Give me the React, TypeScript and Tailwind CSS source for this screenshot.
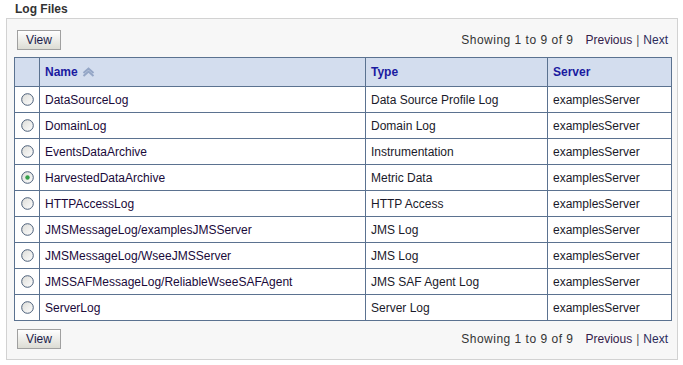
import React, { useState } from "react";

const rows = [
  { name: "DataSourceLog", type: "Data Source Profile Log", server: "examplesServer" },
  { name: "DomainLog", type: "Domain Log", server: "examplesServer" },
  { name: "EventsDataArchive", type: "Instrumentation", server: "examplesServer" },
  { name: "HarvestedDataArchive", type: "Metric Data", server: "examplesServer" },
  { name: "HTTPAccessLog", type: "HTTP Access", server: "examplesServer" },
  { name: "JMSMessageLog/examplesJMSServer", type: "JMS Log", server: "examplesServer" },
  { name: "JMSMessageLog/WseeJMSServer", type: "JMS Log", server: "examplesServer" },
  { name: "JMSSAFMessageLog/ReliableWseeSAFAgent", type: "JMS SAF Agent Log", server: "examplesServer" },
  { name: "ServerLog", type: "Server Log", server: "examplesServer" },
];

function Radio({ checked, onClick }: { checked: boolean; onClick: () => void }) {
  return (
    <button onClick={onClick} className="flex items-center justify-center w-[13px] h-[13px]">
      <svg width="13" height="13" viewBox="0 0 13 13">
        <defs>
          <linearGradient id="rg" x1="0" y1="0" x2="1" y2="1">
            <stop offset="0" stopColor="#dcdcd7" />
            <stop offset="1" stopColor="#ffffff" />
          </linearGradient>
        </defs>
        <circle cx="6.5" cy="6.5" r="5.8" fill="url(#rg)" stroke="#4a5e78" strokeWidth="1" />
        {checked && <circle cx="6.5" cy="6.5" r="2.2" fill="#35a04a" />}
      </svg>
    </button>
  );
}

function ViewButton() {
  return (
    <button className="h-[20px] w-[44px] border border-[#a0a0a0] bg-gradient-to-b from-white to-[#dcdcd4] text-[12px] text-[#1a1a4a] leading-none">
      View
    </button>
  );
}

function Pager() {
  return (
    <div className="text-[12px] text-[#333333] flex items-center">
      <span className="tracking-[0.5px]">Showing 1 to 9 of 9</span>
      <span className="ml-[12px] text-[#33204a]">Previous</span>
      <span className="mx-[4px] text-[#555]">|</span>
      <span className="text-[#2b2b5a]">Next</span>
    </div>
  );
}

export default function App() {
  const [selected, setSelected] = useState(3);

  return (
    <div className="w-[683px] h-[365px] bg-white pt-[2px] px-[6px] font-['Liberation_Sans',Arial,sans-serif]">
      <h2 className="text-[12px] font-bold text-[#333] leading-[14px] ml-[9px] h-[16px]">Log Files</h2>
      <div className="border border-[#d2d2d2] bg-[#f7f7f7] h-[342px] pt-[11px] px-[7px] w-[672px]">
        <div className="flex items-center justify-between h-[20px] pl-[3px] pr-[2px]">
          <ViewButton />
          <Pager />
        </div>
        <table className="mt-[7px] w-[658px] border-collapse border border-[#5b7290] text-[12px] text-[#1a1a2a]">
          <thead>
            <tr className="h-[29px] bg-[#d3ddee]">
              <th className="w-[25px] border border-[#5b7290]"></th>
              <th className="w-[326px] border border-[#5b7290] text-left pl-[5px] text-[#1a1aa0] font-bold">
                <span className="inline-flex items-center gap-[4px]">
                  Name
                  <svg width="13" height="10" viewBox="0 0 13 10">
                    <path d="M1.5 6 L6.5 1.5 L11.5 6" fill="none" stroke="#94a6c6" strokeWidth="2" />
                    <path d="M1.5 9 L6.5 4.5 L11.5 9" fill="none" stroke="#94a6c6" strokeWidth="2" />
                  </svg>
                </span>
              </th>
              <th className="w-[182px] border border-[#5b7290] text-left pl-[5px] text-[#1a1aa0] font-bold">Type</th>
              <th className="border border-[#5b7290] text-left pl-[5px] text-[#1a1aa0] font-bold">Server</th>
            </tr>
          </thead>
          <tbody>
            {rows.map((r, i) => (
              <tr key={r.name} className="h-[26px] bg-white">
                <td className="border border-[#5b7290] text-center align-middle">
                  <div className="flex justify-center">
                    <Radio checked={selected === i} onClick={() => setSelected(i)} />
                  </div>
                </td>
                <td className="border border-[#5b7290] pl-[5px] text-[#1a0a3a]">{r.name}</td>
                <td className="border border-[#5b7290] pl-[5px]">{r.type}</td>
                <td className="border border-[#5b7290] pl-[5px]">{r.server}</td>
              </tr>
            ))}
          </tbody>
        </table>
        <div className="flex items-center justify-between h-[20px] mt-[8px] pl-[3px] pr-[2px]">
          <ViewButton />
          <Pager />
        </div>
      </div>
    </div>
  );
}
